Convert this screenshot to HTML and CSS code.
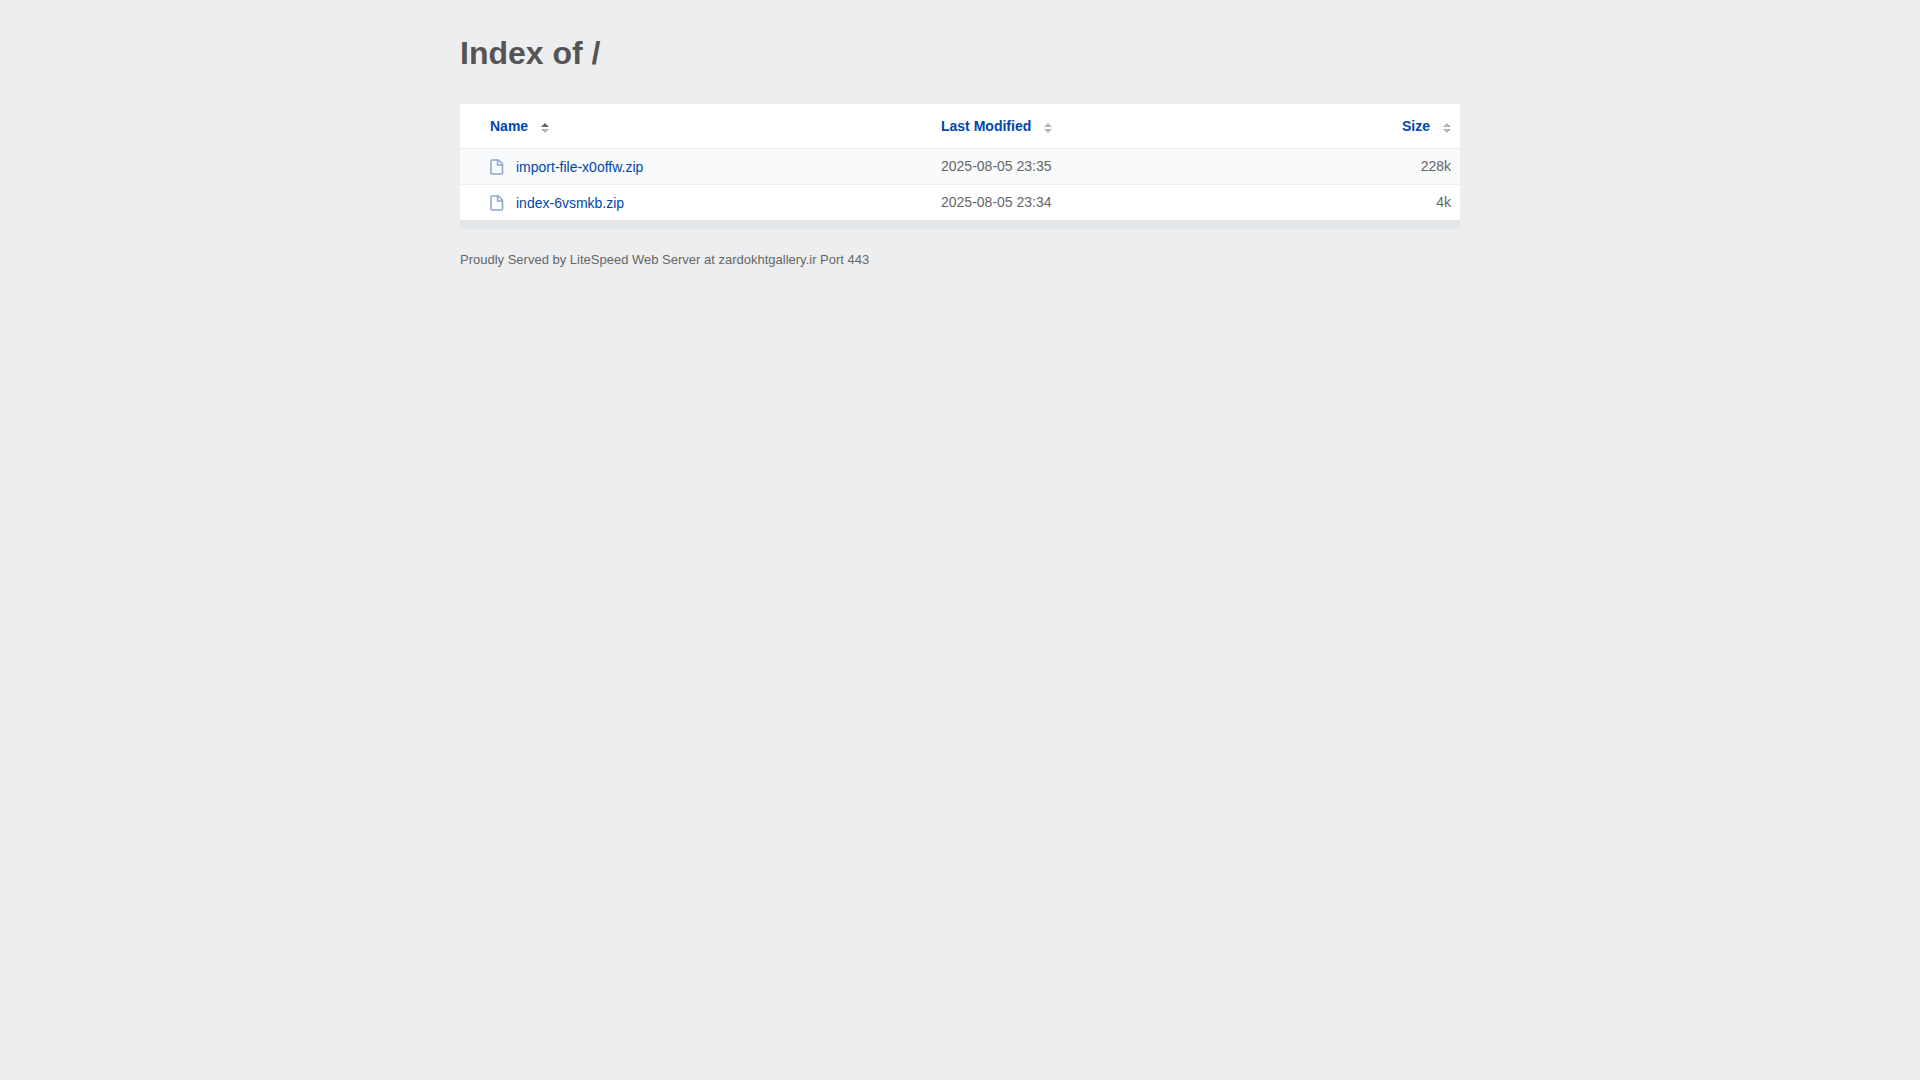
FILE: index.html
```html
<!DOCTYPE html>
<html lang="en">
<head>
  <meta charset="UTF-8">
  <meta name="viewport" content="width=device-width, initial-scale=1.0">
  <title>Index of /</title>
  <link rel="stylesheet" href="styles.css">
</head>
<body>
  <div class="content">
    <h1>Index of /</h1>

    <table id="table-list">
      <thead>
        <tr>
          <th class="name"><a href="#">Name<span class="sort asc"></span></a></th>
          <th class="modified"><a href="#">Last Modified<span class="sort"></span></a></th>
          <th class="size"><a href="#">Size<span class="sort"></span></a></th>
        </tr>
      </thead>
      <tbody>
        <tr>
          <td class="name">
            <a href="import-file-x0offw.zip">
              <svg class="icon" width="14" height="16" viewBox="0 0 14 16"><path d="M2 1H8.500L12.500 5V14Q12.500 15 11.500 15H2Q1 15 1 14V2Q1 1 2 1ZM7.500 1V6H12.500"/></svg>
              import-file-x0offw.zip
            </a>
          </td>
          <td class="modified">2025-08-05 23:35</td>
          <td class="size">228k</td>
        </tr>
        <tr>
          <td class="name">
            <a href="index-6vsmkb.zip">
              <svg class="icon" width="14" height="16" viewBox="0 0 14 16"><path d="M2 1H8.500L12.500 5V14Q12.500 15 11.500 15H2Q1 15 1 14V2Q1 1 2 1ZM7.500 1V6H12.500"/></svg>
              index-6vsmkb.zip
            </a>
          </td>
          <td class="modified">2025-08-05 23:34</td>
          <td class="size">4k</td>
        </tr>
      </tbody>
    </table>

    <address>Proudly Served by LiteSpeed Web Server at zardokhtgallery.ir Port 443</address>
  </div>
</body>
</html>
```
FILE: styles.css
```css
body {
  margin: 0;
  padding: 0 20px;
  background-color: #edeef0;
  color: #666;
  font-family: "Liberation Sans", Arial, sans-serif;
  font-size: 14px;
  line-height: 20px;
}

.content {
  max-width: 1000px;
  margin: 0 auto;
}

h1 {
  margin: 32px 0 30px;
  color: #555;
  font-size: 32px;
  line-height: 42px;
}

a {
  color: #0046ad;
  text-decoration: none;
}

a:hover {
  text-decoration: underline;
}

table {
  width: 100%;
  table-layout: fixed;
  border-spacing: 0;
  background: #fff;
  border-bottom: 9px solid #e3e7ea;
}

th,
td {
  padding: 7px 9px;
  text-align: left;
  vertical-align: top;
}

th {
  padding: 12px 9px;
}

td {
  border-top: 1px solid #ebedef;
}

tbody tr:nth-child(odd) {
  background: #f9fafc;
}

.name {
  width: 433px;
  padding-left: 30px;
}

.size {
  text-align: right;
}

th a {
  display: inline-flex;
  align-items: center;
}

td a {
  display: flex;
  align-items: center;
  gap: 12px;
}

.icon {
  fill: none;
  stroke: #8ca5cf;
  stroke-width: 1.5;
}

/* up and down arrows beside the column titles */
.sort {
  display: flex;
  flex-direction: column;
  gap: 2px;
  margin: 4px 0 0 13px;
}

.sort::before,
.sort::after {
  content: "";
  border: 4px solid transparent;
}

.sort::before {
  border-top: 0;
  border-bottom-color: #b2b2b2;
}

.sort::after {
  border-bottom: 0;
  border-top-color: #b2b2b2;
}

.asc::before {
  border-bottom-color: #666;
}

tbody .name {
  padding-top: 8px;
}

address {
  margin-top: 21px;
  font-size: 13px;
  font-style: normal;
}
```
